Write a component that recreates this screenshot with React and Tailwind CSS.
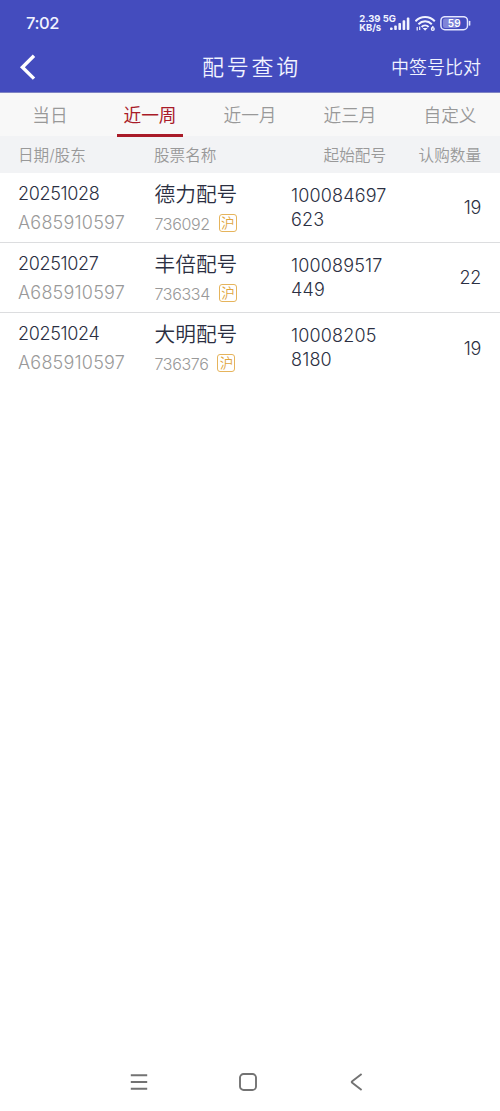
import React from "react";

const tabs = ["当日", "近一周", "近一月", "近三月", "自定义"];

const rows = [
  { date: "20251028", holder: "A685910597", name: "德力配号", code: "736092", start: ["100084697", "623"], count: "19" },
  { date: "20251027", holder: "A685910597", name: "丰倍配号", code: "736334", start: ["100089517", "449"], count: "22" },
  { date: "20251024", holder: "A685910597", name: "大明配号", code: "736376", start: ["10008205", "8180"], count: "19" },
];

function StatusBar() {
  return (
    <div className="flex h-[45px] items-center pl-[26px] pr-[29px] pt-[2px]">
      <span className="text-[16.5px] font-medium tracking-[-0.4px]">7:02</span>
      <div className="ml-auto flex items-center">
        <div className="flex h-5 flex-col justify-center whitespace-nowrap pb-px text-[9.5px] font-bold leading-[9px]">
          <span>2.39 5G</span>
          <span className="tracking-[-0.1px]">KB/s</span>
        </div>
        <svg className="-ml-[6px]" width="20" height="14" viewBox="0 0 20 14" fill="currentColor">
          <rect x="0" y="10.4" width="2.6" height="2.6" rx="0.8" />
          <rect x="4.2" y="8.6" width="2.6" height="4.4" rx="0.8" />
          <rect x="8.4" y="6" width="2.6" height="7" rx="0.8" />
          <rect x="12.6" y="3.2" width="2.6" height="9.8" rx="0.8" />
          <rect x="16.8" y="0.6" width="2.6" height="12.4" rx="0.8" />
        </svg>
        <svg className="ml-[5px]" width="22" height="17" viewBox="0 0 22 17" fill="none" stroke="currentColor" strokeWidth="2">
          <path d="M0.4 6.2C6 0.6 14.2 0.6 19.8 6.2" />
          <path d="M3.4 9.2C7.3 5.4 12.9 5.4 16.8 9.2" />
          <path d="M6.6 12C8.6 10 11.6 10 13.6 12" />
          <path d="M7.6 13L10.1 15.8L12.6 13Z" fill="currentColor" stroke="none" />
          <path d="M2.2 12V15.5M4.7 11.5V15" strokeWidth="1.2" />
          <path d="M18.2 11L16.8 13.3" strokeWidth="1.3" />
          <circle cx="17.8" cy="14" r="1.4" strokeWidth="1.3" />
        </svg>
        <svg className="ml-[3px]" width="31" height="16" viewBox="0 0 31 16" fill="none">
          <rect x="3" y="2.4" width="15" height="9.5" rx="2" fill="#8085d8" />
          <rect x="0.9" y="0.7" width="26.6" height="13" rx="4" stroke="#e4e6ff" strokeWidth="1.5" />
          <path d="M29.6 5.4V9" stroke="#e4e6ff" strokeWidth="1.5" strokeLinecap="round" />
          <text x="14.2" y="10.9" textAnchor="middle" fontSize="10" fontWeight="600" fill="#fff">59</text>
        </svg>
      </div>
    </div>
  );
}

function Row({ row, last }) {
  return (
    <div className={last ? "flex h-[70px] pl-[18px] pr-[19px]" : "flex h-[70px] border-b border-[#dcdddf] pl-[18px] pr-[19px]"}>
      <div className="w-[136.5px] pt-[7px]">
        <div className="h-[28px] text-[18px] leading-[28px] tracking-[-0.35px]">{row.date}</div>
        <div className="h-[30px] text-[18px] leading-[30px] tracking-[0.22px] text-[#999]">{row.holder}</div>
      </div>
      <div className="w-[136.5px] pt-[7px]">
        <div className="h-[29px] text-[20.7px] leading-[29px]">{row.name}</div>
        <div className="flex h-[29px] items-center">
          <span className="text-[16px] tracking-[-0.35px] text-[#999]">{row.code}</span>
          <span className="mb-px ml-[9px] flex h-[18px] w-[18px] items-center justify-center rounded-[3px] border border-[#e6b45c] pt-px text-[13.5px] leading-none text-[#e0a43c]">沪</span>
        </div>
      </div>
      <div className="w-[110px] pt-[11px] text-[18px] leading-[24px] tracking-[0.15px]">
        {row.start.map((s) => (
          <div key={s}>{s}</div>
        ))}
      </div>
      <div className="ml-auto flex items-center text-[18px] tracking-[-0.3px]">{row.count}</div>
    </div>
  );
}

export default function App() {
  return (
    <div lang="zh-CN" className="flex h-[1111px] w-[500px] flex-col overflow-hidden bg-white font-['Inter','Noto_Sans_CJK_SC',sans-serif] font-[350] text-[#2b2f42]">
      <header className="h-[93px] border-b border-[#7f84c4] bg-[#444cbe] text-[#f1f3ff]">
        <StatusBar />
        <div className="grid h-[44px] grid-cols-3 items-center px-[19px]">
          <svg width="18" height="26" viewBox="0 0 18 26" fill="none" stroke="#fff" strokeWidth="3.4">
            <path d="M15 1.8L3.4 13.2L15 24.6" />
          </svg>
          <h1 className="whitespace-nowrap pl-[3px] pt-px text-center text-[22px] tracking-[2.8px]">配号查询</h1>
          <span className="whitespace-nowrap text-right text-[18px]">中签号比对</span>
        </div>
      </header>
      <nav className="relative grid h-[43px] grid-cols-5 bg-[#f8f8f8] text-[17.7px] text-[#999]">
        {tabs.map((t, i) => (
          <div key={t} className="flex justify-center">
            {i === 1 ? (
              <span className="h-[44px] w-[66px] border-b-[3px] border-[#a91b28] text-center font-normal leading-[45px] text-[#a91b28]">{t}</span>
            ) : (
              <span className="leading-[45px]">{t}</span>
            )}
          </div>
        ))}
      </nav>
      <div className="flex h-[37px] items-center bg-[#f2f3f5] pl-[18px] pr-[19px] pt-[2px] text-[15.6px] text-[#999]">
        <span className="w-[136px]">日期/股东</span>
        <span className="w-[136px]">股票名称</span>
        <span className="w-[96px] text-right">起始配号</span>
        <span className="ml-auto">认购数量</span>
      </div>
      <main className="flex-1">
        {rows.map((r, i) => (
          <Row key={r.date} row={r} last={i === rows.length - 1} />
        ))}
      </main>
      <footer className="flex h-[58px] items-center pl-[130px] text-[#737373]">
        <svg width="18" height="18" viewBox="0 0 18 18" stroke="currentColor" strokeWidth="2">
          <path d="M0.8 2.2H17.2M0.8 9H17.2M0.8 15.8H17.2" />
        </svg>
        <svg className="ml-[91px]" width="18" height="18" viewBox="0 0 18 18" fill="none" stroke="currentColor" strokeWidth="1.9">
          <rect x="1" y="1" width="16" height="16" rx="3.6" />
        </svg>
        <svg className="ml-[93px]" width="13" height="18" viewBox="0 0 13 18" fill="none" stroke="currentColor" strokeWidth="1.9">
          <path d="M11.6 1L2.2 8.2Q1.2 9 2.2 9.8L11.6 17" />
        </svg>
      </footer>
    </div>
  );
}
